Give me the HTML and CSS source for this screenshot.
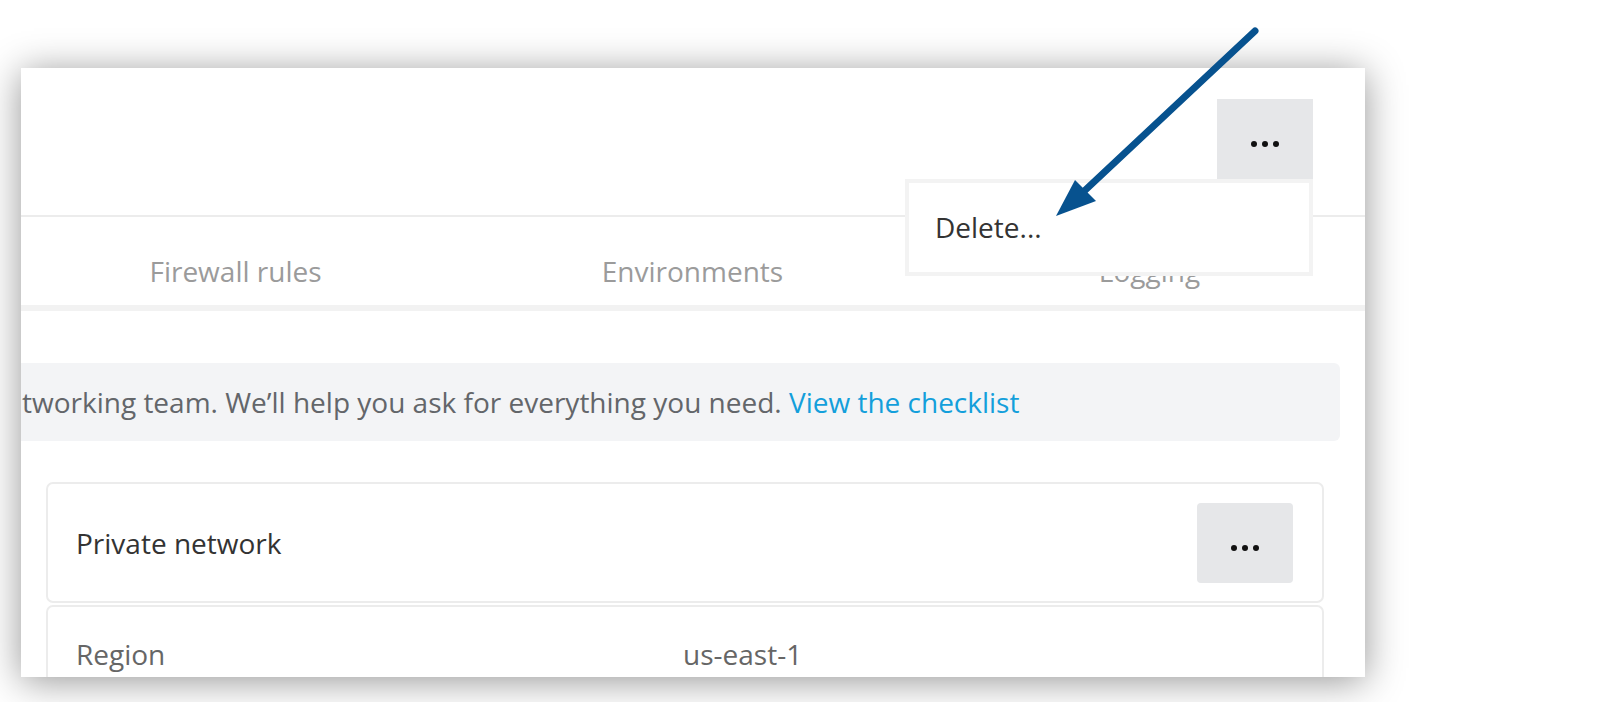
FILE: index.html
```html
<!DOCTYPE html>
<html lang="en">
<head>
<meta charset="utf-8">
<title>Private network</title>
<link rel="stylesheet" href="styles.css">
</head>
<body>
<div class="panel">
  <div class="header">
    <button class="more more-top" type="button" aria-label="More actions">
      <svg width="28" height="6" viewBox="0 0 28 6"><circle cx="3" cy="3" r="3"/><circle cx="14" cy="3" r="3"/><circle cx="25" cy="3" r="3"/></svg>
    </button>
    <div class="menu">
      <div class="menu-item">Delete...</div>
    </div>
  </div>
  <div class="tabs">
    <div class="tab">Firewall rules</div>
    <div class="tab">Environments</div>
    <div class="tab">Logging</div>
  </div>
  <div class="banner">tworking team. We’ll help you ask for everything you need. <a class="link" href="#">View the checklist</a></div>
  <div class="cards">
    <div class="card card-head">
      <div class="card-title">Private network</div>
      <button class="more" type="button" aria-label="More actions">
        <svg width="28" height="6" viewBox="0 0 28 6"><circle cx="3" cy="3" r="3"/><circle cx="14" cy="3" r="3"/><circle cx="25" cy="3" r="3"/></svg>
      </button>
    </div>
    <div class="card card-body">
      <div class="label">Region</div>
      <div class="value">us-east-1</div>
    </div>
  </div>
</div>
<svg class="arrow" width="1610" height="702" viewBox="0 0 1610 702">
  <line x1="1255" y1="31" x2="1080" y2="195" stroke="#07528f" stroke-width="7" stroke-linecap="round"/>
  <polygon points="1056,216 1075,180 1096,201" fill="#07528f"/>
</svg>
</body>
</html>
```
FILE: styles.css
```css
* { box-sizing: border-box; }
html, body { margin: 0; padding: 0; background: #ffffff; }
body {
  font-family: "Open Sans", "Noto Sans", sans-serif;
  font-size: 28px;
  line-height: 40px;
  color: #333333;
  width: 1610px;
  height: 702px;
  overflow: hidden;
  position: relative;
}
.panel {
  margin: 68px 0 0 21px;
  width: 1344px;
  height: 609px;
  background: #ffffff;
  overflow: hidden;
  box-shadow: 0 4px 36px rgba(0, 0, 0, 0.42);
  position: relative;
}
.header {
  position: relative;
  height: 149px;
  border-bottom: 2px solid #ececec;
  padding: 31px 52px 0 0;
  display: flex;
  justify-content: flex-end;
  align-items: flex-start;
  z-index: 2;
}
.more {
  width: 96px;
  height: 80px;
  border: 0;
  margin: 0;
  background: #e6e7e9;
  border-radius: 4px;
  display: flex;
  align-items: center;
  justify-content: center;
  padding: 9px 0 0 0;
  fill: #111111;
}
.more-top { border-radius: 0; }
.menu {
  position: absolute;
  top: 111px;
  right: 52px;
  width: 408px;
  background: #ffffff;
  border: 4px solid #f3f3f3;
  padding: 24px 24px 25px 26px;
}
.menu-item { color: #333333; }
.tabs {
  display: grid;
  grid-template-columns: 457px 457px 457px;
  margin-left: -14px;
  height: 94px;
  padding-top: 34px;
  border-bottom: 6px solid #f2f2f2;
  width: 1372px;
}
.tab {
  text-align: center;
  color: #9b9b9b;
}
.banner {
  margin: 52px 25px 0 0;
  padding: 19px 0 19px 1px;
  background: #f3f4f6;
  border-radius: 0 6px 6px 0;
  color: #63666a;
  white-space: nowrap;
}
.link {
  color: #139fdb;
  text-decoration: none;
}
.cards {
  margin: 41px 41px 0 25px;
}
.card {
  border: 2px solid #ececec;
  border-radius: 7px;
  background: #ffffff;
}
.card-head {
  display: flex;
  justify-content: space-between;
  align-items: center;
  padding: 19px 29px 18px 28px;
}
.card-title { color: #333333; }
.card-body {
  margin-top: 2px;
  display: grid;
  grid-template-columns: 607px 1fr;
  padding: 27px 28px;
  height: 140px;
}
.label, .value { color: #666666; }
.arrow {
  position: absolute;
  top: 0;
  left: 0;
  z-index: 10;
  pointer-events: none;
}
```
